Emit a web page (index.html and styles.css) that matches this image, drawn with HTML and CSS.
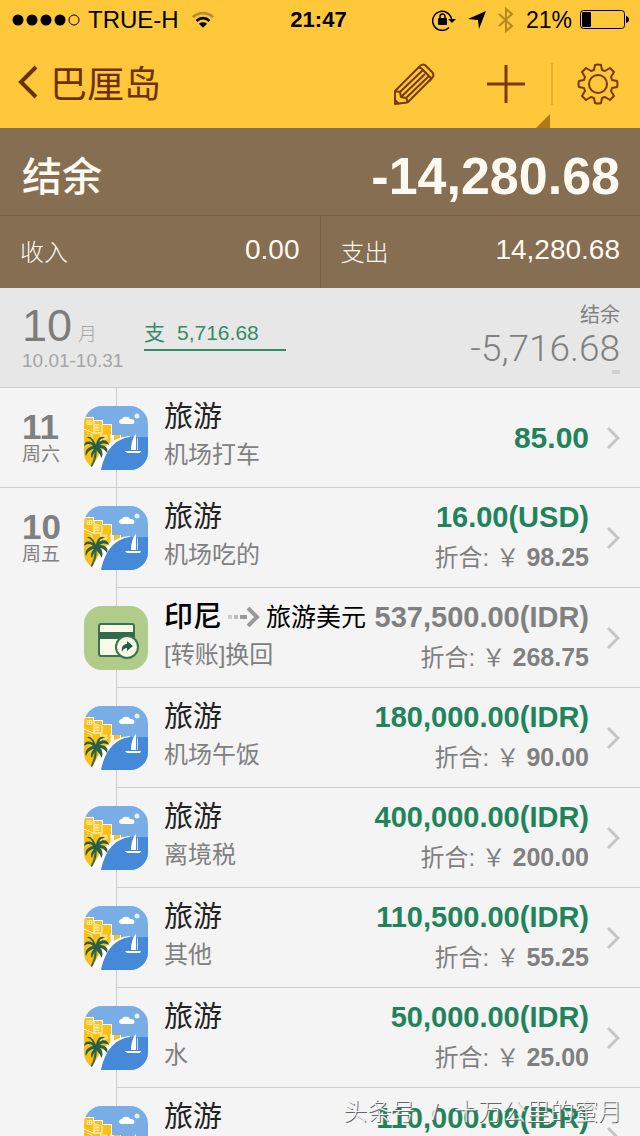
FILE: index.html
```html
<!DOCTYPE html>
<html lang="zh-CN">
<head>
  <meta charset="UTF-8" />
  <meta name="viewport" content="width=device-width, initial-scale=1.0" />
  <title>巴厘岛</title>
  <link rel="stylesheet" href="styles.css">
</head>
<body>
  <svg class="sprite" aria-hidden="true">
    <symbol id="travel" viewBox="0 0 64 64">
      <clipPath id="tile"><rect width="64" height="64" rx="18"/></clipPath>
      <g clip-path="url(#tile)">
        <rect width="64" height="64" fill="#78ade6"/>
        <path d="M0 11h10v3h9v4h9v11h9v8L20 64H0z" fill="#fff"/>
        <path d="M0 12h9v3h9v4h9v17l-9 8-12 20H0z" fill="#fdbf10"/>
        <path d="M30 29h6v5l-6 4z" fill="#fdbf10"/>
        <path d="M0 23l9 4h8v10M10 15v12M18 19v8M27 28v9" fill="none" stroke="#fff"/>
        <path d="M3 14.500h5v4H3zM5.500 14.500v4M3 16.500h5M11 18.500h4v6h-4zM13 18.500v6M11 21.500h4M19 29h4v4h-4zM21 29v4M3 27l5 2v4" fill="none" stroke="#ffe9a6"/>
        <path d="M9 64C14 46 24 32 46 30L30 64z" fill="#fff"/>
        <path d="M17 64C20 48 29 33 46 31h18v33z" fill="#4689d8"/>
        <path d="M38 18c-4 0-4-5 0-5 1-3 7-3 8 0 5-1 6 5 2 5z" fill="#fff"/>
        <circle cx="53" cy="10" r="2.500" fill="#e4f0fc"/>
        <path d="M52 28v16h-5c0-7 2-13 5-16z" fill="#fff"/>
        <path d="M53 30v14h1V34z" fill="#cfe2f6"/>
        <path d="M41 45h16l-1 2H43z" fill="#fff"/>
        <path d="M12 41c2 6 0 13-4 20h-2c4-7 5-13 4-20z" fill="#33684e"/>
        <path d="M12 39C9 32 5 29 3 32c3 0 5 2 6 5-5-3-9-1-9 3 4-3 7-2 9 0-5 1-9 5-7 10 2-5 5-7 8-7-3 3-4 7-2 9 1-4 3-6 4-8 3 3 5 5 5 8 3-3 1-8-1-10 3 0 5 2 7 5 2-5-2-8-7-8 2-2 5-2 9 0-1-5-6-6-10-3 1-3 3-4 6-4-4-3-8 0-9 7z" fill="#24604c"/>
      </g>
    </symbol>
    <symbol id="transfer" viewBox="0 0 64 64">
      <rect width="64" height="64" rx="18" fill="#b1cc8a"/>
      <rect x="15" y="18" width="35" height="32" rx="2" fill="#f8fce6" stroke="#3c7254" stroke-width="2"/>
      <path d="M15 26h35v7H15z" fill="#33694c"/>
      <circle cx="43" cy="41" r="11" fill="#f8fce6" stroke="#3c7254" stroke-width="2"/>
      <path d="M38 46c-1-6 2-8 5-8v-3l6 5-6 5v-3c-2 0-4 1-5 4z" fill="#245c45"/>
    </symbol>
    <symbol id="next" viewBox="0 0 14 24">
      <path d="M2 2l10 10L2 22" fill="none" stroke="#c5c5c5" stroke-width="3"/>
    </symbol>
  </svg>

  <div class="app">
    <header class="header">
      <div class="status">
        <div class="status-left">
          <svg width="68" height="12" viewBox="0 0 68 12">
            <circle cx="6" cy="6" r="5.500"/><circle cx="20" cy="6" r="5.500"/><circle cx="34" cy="6" r="5.500"/><circle cx="48" cy="6" r="5.500"/>
            <circle cx="62" cy="6" r="5" fill="none" stroke="#000"/>
          </svg>
          <span class="carrier">TRUE-H</span>
          <svg width="24" height="20" viewBox="0 0 26 20" fill="none" stroke-width="3">
            <path d="M2 7C8 1 18 1 24 7" stroke="#b8902a"/>
            <path d="M6 11c4-4 10-4 14 0" stroke="#000"/>
            <path d="M13 18.500l-4.500-4.500c3-2 6-2 9 0z" fill="#000" stroke="none"/>
          </svg>
        </div>
        <time class="clock">21:47</time>
        <div class="status-right">
          <svg width="24" height="22" viewBox="0 0 24 22">
            <path d="M17 18.500A9.500 9.500 0 1 1 19.500 10" fill="none" stroke="#000" stroke-width="1.500"/>
            <path d="M16 10h8l-4 4z"/>
            <rect x="6" y="9" width="9" height="7" rx="1"/>
            <path d="M8 9V7.500a2.500 2.500 0 0 1 5 0V9" fill="none" stroke="#000" stroke-width="1.500"/>
          </svg>
          <svg class="locate" width="18" height="18" viewBox="0 0 18 18"><path d="M18 0l-7 18-1-9-10-1z"/></svg>
          <svg width="16" height="26" viewBox="0 0 16 26"><path d="M1 7l13 12-6 5V2l6 5L1 19" fill="none" stroke="#b5881f" stroke-width="2"/></svg>
          <span class="charge">21%</span>
          <svg width="49" height="20" viewBox="0 0 49 20">
            <rect x=".5" y=".5" width="44" height="18" rx="3" fill="none" stroke="#000"/>
            <rect x="2" y="2" width="9" height="15" rx="1"/>
            <path d="M46 6c4 1 4 6 0 7z"/>
          </svg>
        </div>
      </div>
      <nav class="nav">
        <button class="back" type="button">
          <svg width="20" height="34" viewBox="0 0 20 34"><path d="M18 2L3 17l15 15" fill="none" stroke="#6d3003" stroke-width="4"/></svg>
          <span>巴厘岛</span>
        </button>
        <div class="tools">
          <button class="tool" type="button" aria-label="编辑">
            <svg width="42" height="42" viewBox="0 0 42 42" fill="none" stroke="#7a3804" stroke-width="2" stroke-linejoin="round">
              <path d="M2 28L27 3q3-3 6 0l6 6q3 3 0 6L15 39q-2 1-5 1l-8 1z"/>
              <path d="M2 28l5 1 1 5 5 1 2 4M7 29L30 7M8 34L32 11M13 35L36 13M25 5q3-1 5 2l6 6q3 2 1 5M2 37l4 4"/>
            </svg>
          </button>
          <button class="tool tool-add" type="button" aria-label="添加">
            <svg width="40" height="40" viewBox="0 0 40 40"><path d="M20 1v38M1 20h38" stroke="#7a3804" stroke-width="3"/></svg>
          </button>
          <button class="tool tool-settings" type="button" aria-label="设置">
            <svg width="42" height="42" viewBox="0 0 42 42" fill="none" stroke="#7a3804" stroke-width="2" stroke-linejoin="round">
              <path d="M17 7l1-5q3-1 6 0l1 5 3 1 5-3 4 4-3 5 1 3 5 1q1 3 0 6l-5 1-1 3 3 5-4 4-5-3-3 1-1 5q-3 1-6 0l-1-5-3-1-5 3-4-4 3-5-1-3-5-1q-1-3 0-6l5-1 1-3-3-5 4-4 5 3z"/>
              <circle cx="21" cy="21" r="9"/>
            </svg>
          </button>
        </div>
      </nav>
    </header>

    <section class="summary">
      <div class="balance"><h1>结余</h1><strong>-14,280.68</strong></div>
      <div class="totals">
        <div class="total"><span>收入</span><b>0.00</b></div>
        <div class="total"><span>支出</span><b>14,280.68</b></div>
      </div>
    </section>

    <section class="month">
      <div class="month-date">
        <div class="month-name"><b>10</b><span>月</span></div>
        <div class="month-range">10.01-10.31</div>
      </div>
      <div class="month-spent"><span>支</span><span>5,716.68</span></div>
      <div class="month-balance">
        <span>结余</span>
        <b>-5,716.68</b>
        <i></i>
      </div>
    </section>

    <main class="days">
      <section class="day">
        <div class="day-date"><b>11</b><span>周六</span></div>
        <div class="entries">
          <article class="entry">
            <svg class="entry-icon"><use href="#travel"/></svg>
            <div class="entry-text"><h2>旅游</h2><p>机场打车</p></div>
            <div class="entry-amount"><b class="large">85.00</b></div>
            <svg class="next"><use href="#next"/></svg>
          </article>
        </div>
      </section>
      <section class="day">
        <div class="day-date"><b>10</b><span>周五</span></div>
        <div class="entries">
          <article class="entry">
            <svg class="entry-icon"><use href="#travel"/></svg>
            <div class="entry-text"><h2>旅游</h2><p>机场吃的</p></div>
            <div class="entry-amount"><b>16.00(USD)</b><span>折合: ￥ <em>98.25</em></span></div>
            <svg class="next"><use href="#next"/></svg>
          </article>
          <article class="entry entry-transfer">
            <svg class="entry-icon"><use href="#transfer"/></svg>
            <div class="entry-text">
              <h2>印尼
                <svg width="32" height="20" viewBox="0 0 32 20" fill="none" stroke="#999" stroke-width="4">
                  <path d="M0 10h4" stroke="#ccc"/><path d="M6 10h4" stroke="#bbb"/><path d="M12 10h7"/><path d="M20 1l9 9-9 9"/>
                </svg>
                <small>旅游美元</small>
              </h2>
              <p>[转账]换回</p>
            </div>
            <div class="entry-amount"><b>537,500.00(IDR)</b><span>折合: ￥ <em>268.75</em></span></div>
            <svg class="next"><use href="#next"/></svg>
          </article>
          <article class="entry">
            <svg class="entry-icon"><use href="#travel"/></svg>
            <div class="entry-text"><h2>旅游</h2><p>机场午饭</p></div>
            <div class="entry-amount"><b>180,000.00(IDR)</b><span>折合: ￥ <em>90.00</em></span></div>
            <svg class="next"><use href="#next"/></svg>
          </article>
          <article class="entry">
            <svg class="entry-icon"><use href="#travel"/></svg>
            <div class="entry-text"><h2>旅游</h2><p>离境税</p></div>
            <div class="entry-amount"><b>400,000.00(IDR)</b><span>折合: ￥ <em>200.00</em></span></div>
            <svg class="next"><use href="#next"/></svg>
          </article>
          <article class="entry">
            <svg class="entry-icon"><use href="#travel"/></svg>
            <div class="entry-text"><h2>旅游</h2><p>其他</p></div>
            <div class="entry-amount"><b>110,500.00(IDR)</b><span>折合: ￥ <em>55.25</em></span></div>
            <svg class="next"><use href="#next"/></svg>
          </article>
          <article class="entry">
            <svg class="entry-icon"><use href="#travel"/></svg>
            <div class="entry-text"><h2>旅游</h2><p>水</p></div>
            <div class="entry-amount"><b>50,000.00(IDR)</b><span>折合: ￥ <em>25.00</em></span></div>
            <svg class="next"><use href="#next"/></svg>
          </article>
          <article class="entry">
            <svg class="entry-icon"><use href="#travel"/></svg>
            <div class="entry-text"><h2>旅游</h2></div>
            <div class="entry-amount entry-amount-top"><b>110,000.00(IDR)</b></div>
            <svg class="next"><use href="#next"/></svg>
          </article>
        </div>
      </section>
    </main>
    <div class="watermark">头条号<span>/</span>十万公里的蜜月</div>
  </div>
</body>
</html>
```
FILE: styles.css
```css
* {
  box-sizing: border-box;
}
body {
  margin: 0;
  font-family: "Liberation Sans", "Noto Sans CJK SC", sans-serif;
  background: #f4f4f4;
  color: #808080;
}
h1, h2, p {
  margin: 0;
  font-weight: 400;
}
svg {
  display: block;
  flex: none;
}
button {
  display: flex;
  align-items: center;
  padding: 0;
  border: none;
  background: none;
  font-family: inherit;
  cursor: pointer;
}
.sprite {
  position: absolute;
  width: 0;
  height: 0;
}
.app {
  position: relative;
  display: flex;
  flex-direction: column;
  height: 100vh;
  overflow: hidden;
}
.header {
  flex: none;
  background: #fec83a;
}
.status {
  display: grid;
  grid-template-columns: 1fr auto 1fr;
  align-items: center;
  height: 40px;
  padding: 0 11px 0 12px;
  color: #000;
}
.status-left,
.status-right {
  display: flex;
  align-items: center;
}
.status-right {
  justify-content: flex-end;
}
.carrier {
  margin: 0 12px 0 8px;
  font-size: 24px;
}
.clock {
  padding-right: 4px;
  font-size: 22px;
  font-weight: 700;
}
.locate {
  margin: 0 12px;
}
.charge {
  margin: 0 8px 0 12px;
  font-size: 23px;
}
/* Barra de navegación */
.nav {
  display: flex;
  justify-content: space-between;
  height: 88px;
  padding: 0 21px 0 18px;
}
.back {
  gap: 12px;
  padding-bottom: 4px;
  font-size: 37px;
  font-weight: 400;
  color: #6d3003;
}
.tools {
  display: flex;
  align-items: center;
}
.tool {
  height: 42px;
}
.tool-add {
  position: relative;
  margin: 0 25px 0 51px;
}
.tool-add::after {
  content: "";
  position: absolute;
  right: -24px;
  bottom: -23px;
  border-left: 14px solid transparent;
  border-bottom: 14px solid #b17818;
}
.tool-settings {
  padding-left: 24px;
  border-left: 2px solid #e5b02f;
}
.summary {
  flex: none;
  background: #866e53;
  color: #fffaf0;
}
.balance {
  display: flex;
  align-items: center;
  justify-content: space-between;
  height: 88px;
  padding: 8px 20px 0 22px;
  border-bottom: 1px solid #775f45;
}
.balance h1 {
  padding-bottom: 4px;
  font-size: 40px;
  font-weight: 500;
}
.balance strong {
  font-size: 52px;
}
.totals {
  display: flex;
}
.total {
  display: flex;
  flex: 1;
  align-items: center;
  justify-content: space-between;
  height: 72px;
  padding: 0 20px 4px;
  font-size: 24px;
  font-weight: 300;
}
.total + .total {
  border-left: 1px solid #775f45;
}
.total b {
  font-size: 28px;
  font-weight: 400;
}
.month {
  display: flex;
  flex: none;
  align-items: flex-start;
  height: 100px;
  padding: 14px 20px 0 22px;
  border-bottom: 1px solid #ccc;
  background: #e7e7e7;
}
.month-date {
  width: 122px;
  font-size: 19px;
  color: #a5a5a5;
}
.month-name {
  display: flex;
  align-items: baseline;
  gap: 6px;
  height: 48px;
  font-weight: 300;
  line-height: 48px;
}
.month-name b {
  font-size: 45px;
  font-weight: 400;
  color: #7c7c7c;
}
.month-range {
  line-height: 22px;
}
.month-spent {
  display: flex;
  gap: 12px;
  width: 142px;
  margin-top: 14px;
  border-bottom: 2px solid #338c68;
  font-size: 21px;
  line-height: 33px;
  color: #338c68;
}
.month-balance {
  display: flex;
  flex: 1;
  flex-direction: column;
  align-items: flex-end;
  font-size: 20px;
  line-height: 26px;
}
.month-balance b {
  font-family: Roboto, sans-serif;
  font-size: 37px;
  font-weight: 300;
  line-height: 42px;
}
.month-balance i {
  width: 8px;
  height: 4px;
  background: #d0d0d0;
}
.days {
  flex: 1;
  min-height: 0;
  overflow: hidden;
}
.day {
  display: flex;
  border-bottom: 1px solid #ccc;
}
.day-date {
  display: flex;
  flex-direction: column;
  width: 116px;
  padding: 21px 0 0 22px;
  font-size: 19px;
  line-height: 20px;
}
.day-date b {
  font-size: 35px;
  line-height: 36px;
}
.entries {
  flex: 1;
  border-left: 1px solid #ccc;
}
.entry {
  display: flex;
  align-items: center;
  height: 100px;
  padding-right: 20px;
  border-bottom: 1px solid #ccc;
}
.entry:last-child {
  height: 99px;
  border-bottom: none;
}
/* El icono se centra sobre la línea del tiempo */
.entry-icon {
  width: 64px;
  height: 64px;
  margin: 0 16px 0 -33px;
}
.entry-text {
  align-self: flex-start;
  padding-top: 10px;
  font-size: 24px;
  font-weight: 300;
  line-height: 38px;
  white-space: nowrap;
}
.entry h2 {
  display: flex;
  align-items: center;
  height: 38px;
  font-size: 29px;
  color: #222;
}
.entry-amount {
  display: flex;
  flex: 1;
  flex-direction: column;
  align-items: flex-end;
  font-size: 24px;
  line-height: 40px;
  white-space: nowrap;
}
.entry-amount-top {
  align-self: flex-start;
  padding-top: 10px;
}
.entry-amount b {
  font-size: 29px;
  color: #21835c;
}
.entry-amount .large {
  font-size: 30px;
}
.entry-amount em {
  font-size: 25px;
  font-style: normal;
  font-weight: 700;
}
.entry-transfer h2 {
  gap: 6px;
  font-weight: 500;
  color: #000;
}
.entry-transfer small {
  font-size: 25px;
  font-weight: 400;
}
.entry-transfer .entry-amount b {
  color: #808080;
}
.next {
  width: 14px;
  height: 24px;
  margin-left: 17px;
}
.watermark {
  position: absolute;
  right: 18px;
  bottom: 6px;
  font-size: 24px;
  font-weight: 300;
  line-height: 36px;
  color: #f4f4f4;
  text-shadow: 1px 1px 0 #666;
}
.watermark span {
  margin: 0 16px;
}
```
